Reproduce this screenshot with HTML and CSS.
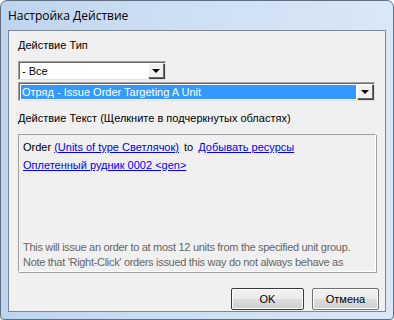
FILE: index.html
```html
<!DOCTYPE html>
<html lang="ru">
<head>
<meta charset="UTF-8" />
<title>Настройка Действие</title>
<link rel="stylesheet" href="styles.css">
</head>
<body>
  <div class="window">
    <div class="titlebar">Настройка Действие</div>
    <div class="client">
      <div class="label">Действие Тип</div>
      <div class="combo combo-short">
        <div class="combo-field">- Все</div>
        <div class="combo-btn"><span class="arrow"></span></div>
      </div>
      <div class="combo combo-long">
        <div class="combo-field selected">Отряд - Issue Order Targeting A Unit</div>
        <div class="combo-btn"><span class="arrow"></span></div>
      </div>

      <div class="label label-text">Действие Текст (Щелкните в подчеркнутых областях)</div>
      <div class="textbox">
        <div class="line">Order <a class="link">(Units of type Светлячок)</a> to <a class="link">Добывать ресурсы</a></div>
        <div class="line"><a class="link">Оплетенный рудник 0002 &lt;gen&gt;</a></div>
        <div class="hint">
          This will issue an order to at most 12 units from the specified unit group.<br>
          Note that 'Right-Click' orders issued this way do not always behave as
        </div>
      </div>

      <div class="buttons">
        <button class="btn btn-ok">OK</button>
        <button class="btn btn-cancel">Отмена</button>
      </div>
    </div>
  </div>
</body>
</html>
```

FILE: styles.css
```css
* {
  box-sizing: border-box;
}
html, body {
  margin: 0;
  padding: 0;
}
body {
  width: 394px;
  height: 320px;
  font-family: "Liberation Sans", Arial, sans-serif;
  font-size: 11px;
  color: #000;
  background: #fff;
}

.window {
  width: 394px;
  height: 320px;
  border: 1px solid #5f6f82;
  border-radius: 7px 7px 4px 4px;
  background: linear-gradient(90deg, #bed4ee 0%, #cddff3 45%, #d9e7f6 100%);
  padding: 0 7px 7px;
  display: flex;
  flex-direction: column;
}

.titlebar {
  height: 29px;
  padding-left: 0;
  display: flex;
  align-items: center;
  font-family: "Open Sans", "Noto Sans", sans-serif;
  font-size: 12px;
  color: #000;
}

.client {
  flex: 1;
  background: #f0f0f0;
  border: 1px solid #7c8896;
  padding: 8px 0 0 9px;
  display: flex;
  flex-direction: column;
}

.label {
  line-height: 13px;
  height: 13px;
  margin-bottom: 9px;
}
.label-text {
  margin-top: 9px;
  margin-bottom: 9px;
}

.combo {
  display: flex;
  height: 19px;
  background: #fff;
  border: 1px solid #a0a0a0;
  border-right-color: #e3e3e3;
  border-bottom-color: #e3e3e3;
  box-shadow: inset 1px 1px 0 #696969;
  padding: 2px 1px 1px 2px;
  margin-bottom: 2px;
}
.combo-short {
  width: 148px;
}
.combo-long {
  width: 357px;
}
.combo-field {
  flex: 1;
  line-height: 14px;
  padding-left: 1px;
  white-space: nowrap;
  overflow: hidden;
}
.combo-field.selected {
  background: #3399ff;
  color: #fff;
  margin-right: 1px;
}
.combo-btn {
  width: 16px;
  height: 15px;
  margin-top: -1px;
  background: #f0f0f0;
  border: 1px solid #fff;
  border-right-color: #696969;
  border-bottom-color: #696969;
  box-shadow: 1px 1px 0 #404040;
  display: flex;
  align-items: center;
  justify-content: center;
}
.arrow {
  width: 0;
  height: 0;
  border-left: 4px solid transparent;
  border-right: 4px solid transparent;
  border-top: 4px solid #000;
  margin-top: 1px;
}

.textbox {
  width: 358px;
  height: 138px;
  border: 1px solid #a0a0a0;
  border-right-color: #fff;
  border-bottom-color: #fff;
  box-shadow: 1px 1px 0 #a0a0a0;
  padding: 6px 4px 0 4px;
  display: flex;
  flex-direction: column;
  overflow: hidden;
}
.line {
  line-height: 13px;
  margin-bottom: 5px;
  white-space: nowrap;
}
.link {
  color: #0000ee;
  text-decoration: underline;
  margin: 0 2px;
}
.line .link:first-child {
  margin-left: 0;
}
.hint {
  margin-top: auto;
  color: #666;
  line-height: 15px;
  letter-spacing: -0.3px;
  white-space: nowrap;
  margin-bottom: 1px;
}

.buttons {
  display: flex;
  justify-content: flex-end;
  gap: 8px;
  margin-top: 16px;
  padding-right: 6px;
}
.btn {
  height: 22px;
  font-family: "Liberation Sans", Arial, sans-serif;
  font-size: 11px;
  color: #000;
  background: linear-gradient(#f2f2f2 0%, #ebebeb 50%, #dddddd 51%, #cfcfcf 100%);
  border: 1px solid #707070;
  border-radius: 2px;
  box-shadow: inset 0 0 0 1px #fcfcfc;
  padding: 0;
}
.btn-ok {
  width: 73px;
  border-color: #3a3a3a;
}
.btn-cancel {
  width: 67px;
}
```
